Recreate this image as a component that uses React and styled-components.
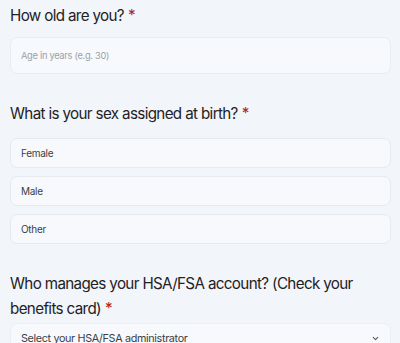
import React from "react"
import styled, { createGlobalStyle } from "styled-components"

const GlobalStyle = createGlobalStyle`
  html, body {
    margin: 0;
    padding: 0;
    background: #f2f5f9;
  }
  body {
    font-family: Inter, "Noto Sans", sans-serif;
    color: #1d2125;
  }
`;

const Page = styled.div`
  display: flex;
  flex-direction: column;
  padding: 3px 9px 0 10px;
`;

const Question = styled.div`
  display: flex;
  flex-direction: column;
  margin-bottom: ${props => props.$after || 27}px;
`;

const Label = styled.h3`
  margin: 0 0 ${props => props.$gap || 9}px 0;
  font-size: 15.2px;
  font-weight: 400;
  line-height: 25px;
  letter-spacing: -0.65px;
  color: #1f2226;
`;

const Star = styled.span`
  color: #b3261e;
  margin-left: 4px;
`;

const TextBox = styled.div`
  height: 37px;
  box-sizing: border-box;
  display: flex;
  align-items: center;
  padding: 0 10px;
  background: #f7f9fc;
  border: 1px solid #e9edf3;
  border-radius: 7px;
  font-size: 9.3px;
  letter-spacing: -0.3px;
  color: #9aa1ab;
`;

const Options = styled.div`
  display: flex;
  flex-direction: column;
  gap: 8px;
`;

const Option = styled.div`
  height: 30px;
  box-sizing: border-box;
  display: flex;
  align-items: center;
  padding: 0 10px;
  background: #f7f9fc;
  border: 1px solid #e6eaf0;
  border-radius: 7px;
  font-size: 10px;
  letter-spacing: -0.3px;
  color: #3b3f45;
`;

const Select = styled.div`
  height: 30px;
  box-sizing: border-box;
  display: flex;
  align-items: center;
  justify-content: space-between;
  padding: 0 10px;
  background: #f7f9fc;
  border: 1px solid #eceff4;
  border-radius: 7px;
  font-size: 10.8px;
  letter-spacing: -0.35px;
  color: #3b3f45;
`;

const Chevron = () => (
  <svg width="9" height="9" viewBox="0 0 24 24" fill="none" stroke="#555b63" strokeWidth="3" strokeLinecap="round" strokeLinejoin="round">
    <path d="M6 9l6 6 6-6" />
  </svg>
)

export default function App() {
  return (
    <>
      <GlobalStyle />
      <Page>
        <Question>
          <Label $gap={9}>How old are you?<Star>*</Star></Label>
          <TextBox>Age in years (e.g. 30)</TextBox>
        </Question>
        <Question>
          <Label $gap={12}>What is your sex assigned at birth?<Star>*</Star></Label>
          <Options>
            <Option>Female</Option>
            <Option>Male</Option>
            <Option>Other</Option>
          </Options>
        </Question>
        <Question>
          <Label $gap={2}>Who manages your HSA/FSA account? (Check your benefits card)<Star>*</Star></Label>
          <Select>
            <span>Select your HSA/FSA administrator</span>
            <Chevron />
          </Select>
        </Question>
      </Page>
    </>
  )
}
